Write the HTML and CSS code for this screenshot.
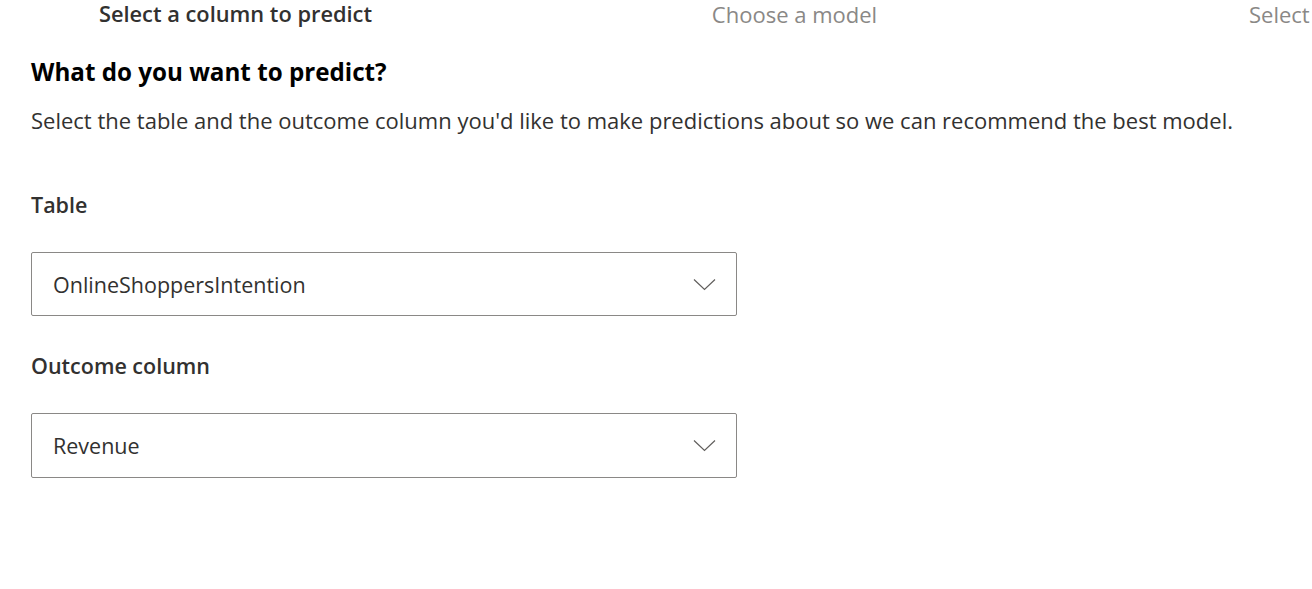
FILE: index.html
```html
<!DOCTYPE html>
<html>
<head>
<meta charset="utf-8">
<link rel="stylesheet" href="styles.css">
</head>
<body>
<div class="page">
  <div class="steps">
    <div class="step active">Select a column to predict</div>
    <div class="step">Choose a model</div>
    <div class="step">Select training data</div>
  </div>
  <div class="content">
    <h1 class="title">What do you want to predict?</h1>
    <p class="desc">Select the table and the outcome column you'd like to make predictions about so we can recommend the best model.</p>
    <div class="field">
      <div class="label">Table</div>
      <div class="dropdown">
        <span class="value">OnlineShoppersIntention</span>
        <svg class="chev" width="23" height="13" viewBox="0 0 23 13"><path d="M1 1.5 L11.5 11.5 L22 1.5" fill="none" stroke="#605e5c" stroke-width="1.2"/></svg>
      </div>
    </div>
    <div class="field">
      <div class="label">Outcome column</div>
      <div class="dropdown">
        <span class="value">Revenue</span>
        <svg class="chev" width="23" height="13" viewBox="0 0 23 13"><path d="M1 1.5 L11.5 11.5 L22 1.5" fill="none" stroke="#605e5c" stroke-width="1.2"/></svg>
      </div>
    </div>
  </div>
</div>
</body>
</html>
```
FILE: styles.css
```css
* { box-sizing: border-box; }
html, body { margin: 0; padding: 0; background: #fff; }
body {
  font-family: "Open Sans", "Noto Sans", sans-serif;
  color: #323130;
  width: 1312px;
  height: 589px;
  overflow: hidden;
}
.page { width: 1312px; overflow: hidden; }
.steps {
  display: grid;
  grid-template-columns: 559px 553px 559px;
  margin-left: -44px;
  height: 28px;
  align-items: center;
}
.step {
  text-align: center;
  font-size: 22px;
  line-height: 28px;
  color: #8a8886;
  white-space: nowrap;
}
.step.active { color: #323130; font-weight: 600; font-size: 21.8px; }
.step:nth-child(2) { padding-left: 6px; }
.content { padding: 26px 31px 0; }
.title {
  margin: 0;
  font-size: 24.2px;
  font-weight: 700;
  color: #000;
  line-height: 36px;
}
.desc {
  margin: 15px 0 0;
  font-size: 22px;
  line-height: 30px;
  white-space: nowrap;
}
.field { margin-top: 56px; }
.field + .field { margin-top: 36px; }
.label {
  font-size: 21.5px;
  font-weight: 600;
  line-height: 28px;
}
.dropdown {
  margin-top: 33px;
  width: 706px;
  height: 64px;
  border: 1px solid #8a8886;
  border-radius: 2px;
  display: flex;
  align-items: center;
  justify-content: space-between;
  padding: 0 20px 0 21px;
}
.field + .field .dropdown { height: 65px; }
.value { font-size: 21.5px; }
.chev { display: block; }
```
